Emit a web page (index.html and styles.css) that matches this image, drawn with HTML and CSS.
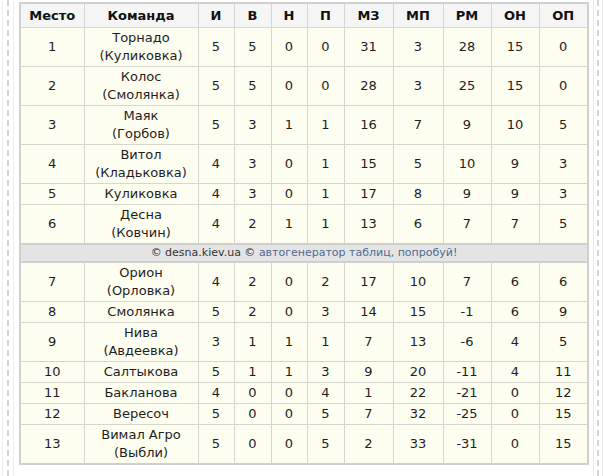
FILE: index.html
```html
<!DOCTYPE html>
<html lang="ru">
<head>
<meta charset="utf-8">
<link rel="stylesheet" href="styles.css">
</head>
<body>
<div class="page">
  <div class="rail rail-left"><span class="l1"></span><span class="l2"></span><span class="l3"></span></div>
  <div class="main">
    <table class="standings">
      <colgroup>
        <col class="c-pos"><col class="c-team"><col class="c-s"><col class="c-s2"><col class="c-s"><col class="c-s2"><col class="c-m"><col class="c-m2"><col class="c-m3"><col class="c-m3"><col class="c-m">
      </colgroup>
      <thead>
        <tr><th>Место</th><th>Команда</th><th>И</th><th>В</th><th>Н</th><th>П</th><th>МЗ</th><th>МП</th><th>РМ</th><th>ОН</th><th>ОП</th></tr>
      </thead>
      <tbody>
        <tr><td>1</td><td>Торнадо<br>(Куликовка)</td><td>5</td><td>5</td><td>0</td><td>0</td><td>31</td><td>3</td><td>28</td><td>15</td><td>0</td></tr>
        <tr><td>2</td><td>Колос<br>(Смолянка)</td><td>5</td><td>5</td><td>0</td><td>0</td><td>28</td><td>3</td><td>25</td><td>15</td><td>0</td></tr>
        <tr><td>3</td><td>Маяк<br>(Горбов)</td><td>5</td><td>3</td><td>1</td><td>1</td><td>16</td><td>7</td><td>9</td><td>10</td><td>5</td></tr>
        <tr><td>4</td><td>Витол<br>(Кладьковка)</td><td>4</td><td>3</td><td>0</td><td>1</td><td>15</td><td>5</td><td>10</td><td>9</td><td>3</td></tr>
        <tr><td>5</td><td>Куликовка</td><td>4</td><td>3</td><td>0</td><td>1</td><td>17</td><td>8</td><td>9</td><td>9</td><td>3</td></tr>
        <tr><td>6</td><td>Десна<br>(Ковчин)</td><td>4</td><td>2</td><td>1</td><td>1</td><td>13</td><td>6</td><td>7</td><td>7</td><td>5</td></tr>
        <tr class="sep"><td colspan="11">© desna.kiev.ua © <span class="gen">автогенератор таблиц, попробуй!</span></td></tr>
        <tr><td>7</td><td>Орион<br>(Орловка)</td><td>4</td><td>2</td><td>0</td><td>2</td><td>17</td><td>10</td><td>7</td><td>6</td><td>6</td></tr>
        <tr><td>8</td><td>Смолянка</td><td>5</td><td>2</td><td>0</td><td>3</td><td>14</td><td>15</td><td>-1</td><td>6</td><td>9</td></tr>
        <tr><td>9</td><td>Нива<br>(Авдеевка)</td><td>3</td><td>1</td><td>1</td><td>1</td><td>7</td><td>13</td><td>-6</td><td>4</td><td>5</td></tr>
        <tr><td>10</td><td>Салтыкова</td><td>5</td><td>1</td><td>1</td><td>3</td><td>9</td><td>20</td><td>-11</td><td>4</td><td>11</td></tr>
        <tr><td>11</td><td>Бакланова</td><td>4</td><td>0</td><td>0</td><td>4</td><td>1</td><td>22</td><td>-21</td><td>0</td><td>12</td></tr>
        <tr><td>12</td><td>Вересоч</td><td>5</td><td>0</td><td>0</td><td>5</td><td>7</td><td>32</td><td>-25</td><td>0</td><td>15</td></tr>
        <tr><td>13</td><td>Вимал Агро<br>(Выбли)</td><td>5</td><td>0</td><td>0</td><td>5</td><td>2</td><td>33</td><td>-31</td><td>0</td><td>15</td></tr>
      </tbody>
    </table>
  </div>
  <div class="rail rail-right"><span class="l1"></span><span class="l2"></span><span class="l3"></span></div>
</div>
</body>
</html>
```
FILE: styles.css
```css
html, body {
  margin: 0;
  padding: 0;
  background: #ffffff;
}
.page {
  display: flex;
  width: 604px;
  height: 476px;
  font-family: "DejaVu Sans", Verdana, sans-serif;
}
.rail {
  display: flex;
  height: 476px;
}
.rail-left {
  width: 19px;
  padding-left: 2px;
  gap: 4px;
  box-sizing: border-box;
}
.rail-right {
  width: 17px;
  padding-left: 6px;
  gap: 3px;
  box-sizing: border-box;
}
.rail span {
  display: block;
  width: 0;
  height: 100%;
}
.rail .l1 { border-left: 1px solid #ececec; }
.rail .l2 { border-left: 2px dashed #d4d4d4; }
.rail .l3 { border-left: 1px solid #ececec; }
.main {
  width: 568px;
  padding-top: 2px;
}
.standings {
  border-collapse: collapse;
  table-layout: fixed;
  width: 568px;
  font-size: 13px;
  color: #1e1e1e;
  border: 2px solid #d0d0d0;
}
.c-pos { width: 64px; }
.c-team { width: 114px; }
.c-s { width: 36px; }
.c-s2 { width: 37px; }
.c-m { width: 49px; }
.c-m2 { width: 50px; }
.c-m3 { width: 48px; }
.standings th,
.standings td {
  border: 1px solid #d6d6ce;
  text-align: center;
  line-height: 18px;
  padding: 1px 0;
  white-space: nowrap;
}
.standings th {
  background: #f5f5f5;
  font-weight: bold;
  color: #111;
  padding: 3px 0 2px;
}
.standings td {
  background: #fdfdf0;
}
.standings .sep td {
  background: #e4e4e4;
  border-top: 2px solid #cfcfcf;
  border-bottom: 2px solid #cfcfcf;
  font-size: 11px;
  line-height: 14px;
  padding: 1px 0;
  color: #333;
}
.gen {
  color: #4d6a94;
}
```
